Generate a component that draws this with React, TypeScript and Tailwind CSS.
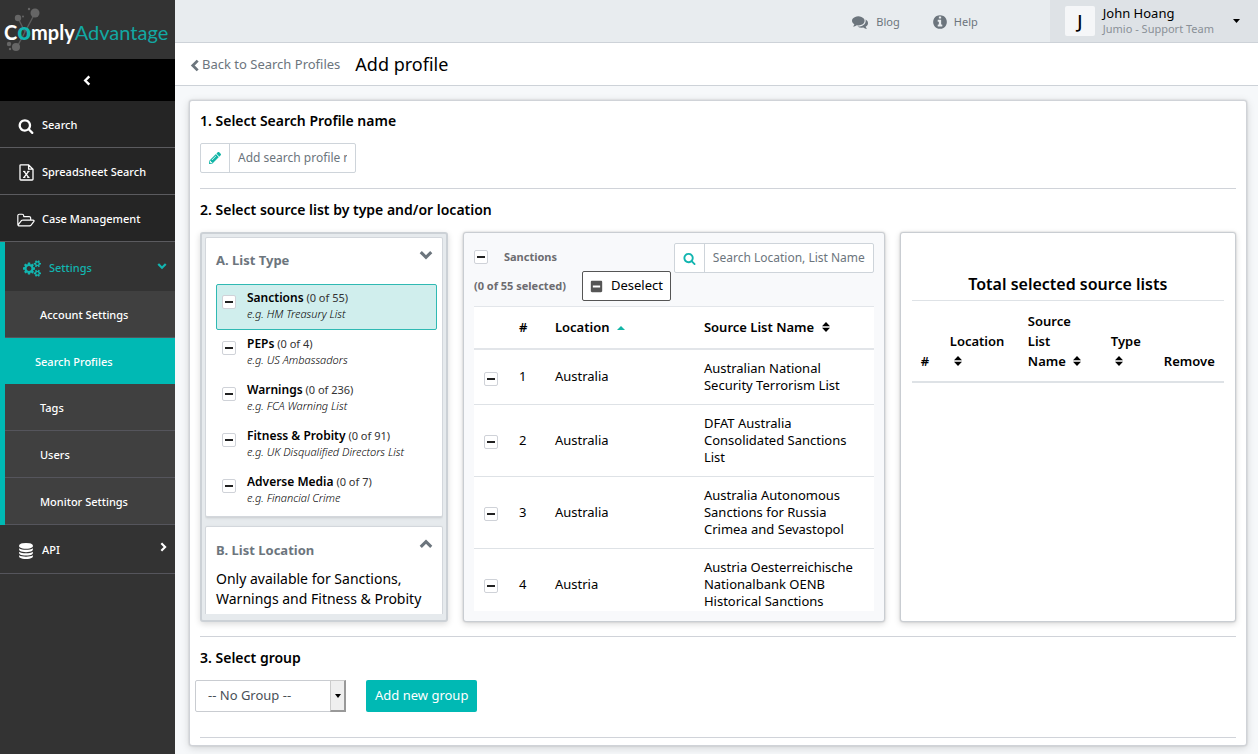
import type { ReactNode } from 'react';
import { FaMinusSquare, FaPencilAlt } from 'react-icons/fa';

const SEARCH =
  'M1216 832q0-185-131.5-316.5t-316.5-131.5-316.5 131.5-131.5 316.5 131.5 316.5 316.5 131.5 316.5-131.5 131.5-316.5zm512 832q0 52-38 90t-90 38q-54 0-90-38l-343-342q-179 124-399 124-143 0-273.5-55.5t-225-150-150-225-55.5-273.5 55.5-273.5 150-225 225-150 273.5-55.5 273.5 55.5 225 150 150 225 55.5 273.5q0 220-124 399l343 343q37 37 37 90z';
const DATABASE =
  'M896 768q237 0 443-43t325-127v170q0 69-103 128t-280 93.5-385 34.5-385-34.5-280-93.5-103-128v-170q119 84 325 127t443 43zm0 768q237 0 443-43t325-127v170q0 69-103 128t-280 93.5-385 34.5-385-34.5-280-93.5-103-128v-170q119 84 325 127t443 43zm0-384q237 0 443-43t325-127v170q0 69-103 128t-280 93.5-385 34.5-385-34.5-280-93.5-103-128v-170q119 84 325 127t443 43zm0-1152q208 0 385 34.5t280 93.5 103 128v128q0 69-103 128t-280 93.5-385 34.5-385-34.5-280-93.5-103-128v-128q0-69 103-128t280-93.5 385-34.5z';
const INFO =
  'M1152 1376v-160q0-14-9-23t-23-9h-96v-512q0-14-9-23t-23-9h-320q-14 0-23 9t-9 23v160q0 14 9 23t23 9h96v320h-96q-14 0-23 9t-9 23v160q0 14 9 23t23 9h448q14 0 23-9t9-23zm-128-896v-160q0-14-9-23t-23-9h-192q-14 0-23 9t-9 23v160q0 14 9 23t23 9h192q14 0 23-9t9-23zm640 416q0 209-103 385.5t-279.5 279.5-385.5 103-385.5-103-279.5-279.5-103-385.5 103-385.5 279.5-279.5 385.5-103 385.5 103 279.5 279.5 103 385.5z';
const COMMENTS =
  'M1408 768q0 139-94 257t-256.5 186.5-353.5 68.5q-86 0-176-16-124 88-278 128-36 9-86 16h-3q-11 0-20.5-8t-11.5-21q-1-3-1-6.5t.5-6.5 2-6l2.5-5 3.5-5.5 4-5 4.5-5 4-4.5q5-6 23-25t26-29.5 22.5-29 25-38.5 20.5-44q-124-72-195-177t-71-224q0-139 94-257t256.5-186.5 353.5-68.5 353.5 68.5 256.5 186.5 94 257zm384 256q0 120-71 224.5t-195 176.5q10 24 20.5 44t25 38.5 22.5 29 26 29.5 23 25q1 1 4 4.5t4.5 5 4 5 3.5 5.5l2.5 5 2 6 .5 6.5-1 6.5q-3 14-13 22t-22 7q-50-7-86-16-154-40-278-128-90 16-176 16-271 0-472-132 58 4 88 4 161 0 309-45t264-129q125-92 192-212t67-254q0-77-23-152 129 71 204 178t75 230z';
const FOLDER =
  'M1781 1003q0-35-53-35h-1088q-40 0-85.5 21.5t-71.5 52.5l-294 363q-18 24-18 40 0 35 53 35h1088q40 0 86-22t71-53l294-363q18-22 18-39zm-1141-163h768v-160q0-40-28-68t-68-28h-576q-40 0-68-28t-28-68v-64q0-40-28-68t-68-28h-320q-40 0-68 28t-28 68v853l256-315q44-53 116-87.5t140-34.5zm1269 163q0 62-46 120l-295 363q-43 53-116 87.5t-140 34.5h-1088q-92 0-158-66t-66-158v-960q0-92 66-158t158-66h320q92 0 158 66t66 158v32h544q92 0 158 66t66 158v160h192q54 0 99 24.5t67 70.5q15 32 15 68z';
const COGS =
  'M896 896q0-106-75-181t-181-75-181 75-75 181 75 181 181 75 181-75 75-181zm768 512q0-52-38-90t-90-38-90 38-38 90q0 53 37.5 90.5t90.5 37.5 90.5-37.5 37.5-90.5zm0-1024q0-52-38-90t-90-38-90 38-38 90q0 53 37.5 90.5t90.5 37.5 90.5-37.5 37.5-90.5zm-384 421v185q0 10-7 19.5t-16 10.5l-155 24q-11 35-32 76 34 48 90 115 7 11 7 20 0 12-7 19-23 30-82.5 89.5t-78.5 59.5q-11 0-21-7l-115-90q-37 19-77 31-11 108-23 155-7 24-30 24h-186q-11 0-20-7.5t-10-17.5l-23-153q-34-10-75-31l-118 89q-7 7-20 7-11 0-21-8-144-133-144-160 0-9 7-19 10-14 41-53t47-61q-23-44-35-82l-152-24q-10-1-17-9.5t-7-19.5v-185q0-10 7-19.5t16-10.5l155-24q11-35 32-76-34-48-90-115-7-11-7-20 0-12 7-20 22-30 82-89t79-59q11 0 21 7l115 90q34-18 77-32 11-108 23-154 7-24 30-24h186q11 0 20 7.5t10 17.5l23 153q34 10 75 31l118-89q8-7 20-7 11 0 21 8 144 133 144 160 0 8-7 19-12 16-42 54t-45 60q23 48 34 82l152 23q10 2 17 10.5t7 19.5zm640 533v140q0 16-149 31-12 27-30 52 51 113 51 138 0 4-4 7-122 71-124 71-8 0-46-47t-52-68q-20 2-30 2t-30-2q-14 21-52 68t-46 47q-2 0-124-71-4-3-4-7 0-25 51-138-18-25-30-52-149-15-149-31v-140q0-16 149-31 13-29 30-52-51-113-51-138 0-4 4-7 4-2 35-20t59-34 30-16q8 0 46 46.5t52 67.5q20-2 30-2t30 2q51-71 92-112l6-2q4 0 124 70 4 3 4 7 0 25-51 138 17 23 30 52 149 15 149 31zm0-1024v140q0 16-149 31-12 27-30 52 51 113 51 138 0 4-4 7-122 71-124 71-8 0-46-47t-52-68q-20 2-30 2t-30-2q-14 21-52 68t-46 47q-2 0-124-71-4-3-4-7 0-25 51-138-18-25-30-52-149-15-149-31v-140q0-16 149-31 13-29 30-52-51-113-51-138 0-4 4-7 4-2 35-20t59-34 30-16q8 0 46 46.5t52 67.5q20-2 30-2t30 2q51-71 92-112l6-2q4 0 124 70 4 3 4 7 0 25-51 138 17 23 30 52 149 15 149 31z';

function Glyph({ d, className, box = '0 0 1792 1792' }: { d: string; className: string; box?: string }) {
  return (
    <svg viewBox={box} className={className} fill="currentColor" aria-hidden="true">
      <path d={d} />
    </svg>
  );
}

const chevronPaths = {
  down: 'M1.5 3.5L6 8L10.5 3.5',
  up: 'M1.5 8.5L6 4L10.5 8.5',
  left: 'M8 1.5L3.5 6L8 10.5',
  right: 'M4 1.5L8.5 6L4 10.5',
};

function Chevron({ dir, className }: { dir: keyof typeof chevronPaths; className: string }) {
  return (
    <svg viewBox="0 0 12 12" className={className} fill="none" stroke="currentColor" strokeWidth="2.6" aria-hidden="true">
      <path d={chevronPaths[dir]} />
    </svg>
  );
}

function ExcelIcon() {
  return (
    <svg viewBox="0 0 15 17" className="h-[17px] w-[15px]" fill="none" stroke="currentColor" strokeWidth="1.3" aria-hidden="true">
      <path d="M1 1.6Q1 .8 1.8.8H9.6L14 5.2V15.2Q14 16 13.2 16H1.8Q1 16 1 15.2ZM9.6.8V5.2H14" />
      <path d="M5 7.4L9.6 13.4M9.6 7.4L5 13.4" />
      <path d="M4 7.4H6.4M8.2 7.4H10.6M4 13.4H6.4M8.2 13.4H10.6" strokeWidth="1" />
    </svg>
  );
}

function SortIcon() {
  return (
    <svg viewBox="0 0 8 10" className="inline-block h-[10px] w-2 align-baseline" fill="currentColor" aria-hidden="true">
      <path d="M4 0L8 4.3H0ZM0 5.7H8L4 10Z" />
    </svg>
  );
}

function Check({ label }: { label: string }) {
  return (
    <input
      type="checkbox"
      aria-label={label}
      className="grid h-[14px] w-[14px] shrink-0 appearance-none place-items-center rounded-[2px] border border-[#cfd2d8] bg-white before:h-[2px] before:w-2 before:bg-[#222] before:content-['']"
    />
  );
}

function Logo() {
  return (
    <div className="relative flex h-[59px] items-center bg-[#333] pl-1 pt-1">
      <svg viewBox="0 0 44 54" className="absolute top-0 left-0 h-[54px] w-11" fill="#666" aria-hidden="true">
        <path d="M35 13L25 32L17 47M18 18L25 32" stroke="#5c5c5c" strokeWidth="1.4" fill="none" />
        <circle cx="35" cy="13" r="4.5" />
        <circle cx="18" cy="18" r="3.2" />
        <circle cx="29" cy="9" r="1.2" />
        <circle cx="23" cy="16.5" r="1" />
        <circle cx="16" cy="47" r="4" />
        <circle cx="9" cy="44" r="2.2" />
        <circle cx="10" cy="49" r="1.2" />
      </svg>
      <span className="relative font-[Lato] text-[20px] leading-6 font-bold whitespace-nowrap text-white">
        C<span className="text-2xl leading-6 font-black text-[#12b5b0]">o</span>mply<span className="font-normal text-[#12a8a3]">Advantage</span>
      </span>
    </div>
  );
}

function NavItem({ icon, children }: { icon: ReactNode; children: ReactNode }) {
  return (
    <a href="#" className="flex h-[47px] items-center gap-2 border-b border-[#5b5b5f] bg-[#252525] pl-[18px] pt-[3px] text-white">
      <span className="flex w-4 shrink-0 justify-center">{icon}</span>
      {children}
    </a>
  );
}

const subItems = ['Account Settings', 'Search Profiles', 'Tags', 'Users', 'Monitor Settings'];

function Sidebar() {
  return (
    <aside className="w-[175px] shrink-0 bg-[#333] text-[11px] font-medium">
      <Logo />
      <button type="button" aria-label="Collapse menu" className="flex h-[42px] w-full items-center justify-center bg-black text-white">
        <Chevron dir="left" className="h-[11px] w-[11px]" />
      </button>
      <nav>
        <NavItem icon={<Glyph d={SEARCH} className="h-4 w-4 shrink-0" />}>Search</NavItem>
        <NavItem icon={<ExcelIcon />}>Spreadsheet Search</NavItem>
        <NavItem icon={<Glyph d={FOLDER} box="0 128 1920 1536" className="h-[14px] w-[18px] shrink-0" />}>Case Management</NavItem>
        <div className="border-l-[5px] border-[#00b9b4]">
          <a href="#" className="flex h-[49px] items-center gap-2 pr-2 pl-[18px] pt-1 text-[#12b5b0]">
            <Glyph d={COGS} box="0 0 1920 1792" className="h-[17px] w-[18px]" />
            <span className="grow">Settings</span>
            <Chevron dir="down" className="mb-1.5 h-[10px] w-[10px]" />
          </a>
          {subItems.map((s) =>
            s === 'Search Profiles' ? (
              <a key={s} href="#" className="flex h-[46px] items-center bg-[#00b9b4] pl-[30px] pt-0.5 text-white">
                {s}
              </a>
            ) : (
              <a key={s} href="#" className="flex h-[47px] items-center border-b border-[#55555c] bg-[#404040] pl-[35px] pt-0.5 text-white">
                {s}
              </a>
            ),
          )}
        </div>
        <a href="#" className="flex h-[49px] items-center gap-2 border-b border-[#55555c] pr-[7px] pl-[18px] pt-[3px] text-white">
          <Glyph d={DATABASE} className="h-4 w-4" />
          <span className="grow">API</span>
          <Chevron dir="right" className="mb-2 h-[10px] w-[10px]" />
        </a>
      </nav>
    </aside>
  );
}

function TopBar() {
  return (
    <header className="flex h-[43px] items-stretch justify-end border-b border-[#cdd2d8] bg-[#e8ecef]">
      <nav className="flex items-center gap-8 pt-0.5 pr-[72px] text-[11px] text-[#6c757d]">
        <a href="#" className="flex items-center gap-2">
          <Glyph d={COMMENTS} className="h-4 w-4" />
          Blog
        </a>
        <a href="#" className="flex items-center gap-1.5">
          <Glyph d={INFO} className="h-4 w-4" />
          Help
        </a>
      </nav>
      <button type="button" className="flex w-[208px] items-center bg-[#dee2e6] pr-[18px] pl-[15px] text-left">
        <span className="flex h-[30px] w-[30px] items-center justify-center rounded-[2px] bg-[#f5f6f8] text-lg font-medium">J</span>
        <span className="ml-2 grow leading-4">
          <span className="block text-[13px]">John Hoang</span>
          <span className="block text-[11px] text-[#8a9097]">Jumio - Support Team</span>
        </span>
        <svg viewBox="0 0 7 4" className="h-1 w-[7px]" aria-hidden="true">
          <path d="M0 0H7L3.5 4Z" />
        </svg>
      </button>
    </header>
  );
}

const types = [
  ['Sanctions', '(0 of 55)', 'e.g. HM Treasury List'],
  ['PEPs', '(0 of 4)', 'e.g. US Ambassadors'],
  ['Warnings', '(0 of 236)', 'e.g. FCA Warning List'],
  ['Fitness & Probity', '(0 of 91)', 'e.g. UK Disqualified Directors List'],
  ['Adverse Media', '(0 of 7)', 'e.g. Financial Crime'],
];

function TypePanel() {
  return (
    <div className="h-[390px] overflow-hidden rounded-[3px] border-2 border-[#ccd1d6] bg-[#e6eaed] p-[3px] pb-1.5 shadow-[0_2px_6px_rgba(0,0,0,0.15)]">
      <div className="flex h-full flex-col gap-[9px] overflow-hidden">
        <section className="shrink-0 rounded-[2px] border border-[#d3d7dc] bg-white pt-2.5 pr-[5px] pb-0.5 pl-[10px] shadow-sm">
          <div className="flex h-9 items-start justify-between pr-1">
            <h3 className="pt-0.5 text-[13px] leading-5 font-bold text-[#6c757d]">A. List Type</h3>
            <Chevron dir="down" className="h-[14px] w-[14px] text-[#6c757d]" />
          </div>
          {types.map(([name, count, eg], i) => (
            <label
              key={name}
              className={
                i === 0
                  ? 'flex h-[46px] gap-[11px] rounded-[2px] border border-[#2fb9b3] bg-[#d0eeed] pt-[5px] pl-[5px]'
                  : 'flex h-[46px] gap-[11px] border border-transparent pt-[5px] pl-[5px]'
              }
            >
              <span className="pt-[5px]">
                <Check label={name} />
              </span>
              <span className="text-[11px] leading-4 whitespace-nowrap">
                <b className="text-xs font-semibold">{name}</b> <span className="text-[#333]">{count}</span>
                <i className="block font-light text-black">{eg}</i>
              </span>
            </label>
          ))}
        </section>
        <section className="shrink-0 rounded-t-[2px] border border-[#d3d7dc] bg-white pt-2.5 pr-[5px] pl-[10px] shadow-sm">
          <div className="flex h-8 items-start justify-between pr-1">
            <h3 className="pt-[3px] text-[13px] leading-5 font-bold text-[#6c757d]">B. List Location</h3>
            <Chevron dir="up" className="h-[14px] w-[14px] text-[#6c757d]" />
          </div>
          <p className="pb-3 text-sm leading-5">Only available for Sanctions, Warnings and Fitness &amp; Probity</p>
        </section>
      </div>
    </div>
  );
}

const sources = [
  ['Australia', 'Australian National Security Terrorism List'],
  ['Australia', 'DFAT Australia Consolidated Sanctions List'],
  ['Australia', 'Australia Autonomous Sanctions for Russia Crimea and Sevastopol'],
  ['Austria', 'Austria Oesterreichische Nationalbank OENB Historical Sanctions'],
];

function SourcePanel() {
  return (
    <div className="flex h-[390px] flex-col overflow-hidden rounded-[3px] border border-[#c9cdd2] bg-[#f8f9fb] p-[10px] shadow-[0_0_2px_rgba(0,0,0,0.2),0_2px_6px_rgba(0,0,0,0.15)]">
      <div className="flex h-[63px] shrink-0 items-start">
        <div className="grow text-[11px] font-bold text-[#6c6c70]">
          <label className="flex h-7 items-center gap-4">
            <Check label="Select all sanctions" />
            Sanctions
          </label>
          <div className="flex items-center gap-4">
            (0 of 55 selected)
            <button type="button" className="flex h-[30px] items-center gap-2 rounded-[2px] border border-[#555] bg-white px-[7px] text-[13px] font-normal text-black">
              <FaMinusSquare size={13} className="text-[#555]" />
              Deselect
            </button>
          </div>
        </div>
        <div className="flex h-[30px] w-[200px] shrink-0 rounded-[2px] border border-[#ced4da] bg-white">
          <span className="flex w-[30px] shrink-0 items-center justify-center border-r border-[#ced4da] text-[#12b5b0]">
            <Glyph d={SEARCH} className="h-[13px] w-[13px]" />
          </span>
          <input aria-label="Search location or list name" placeholder="Search Location, List Name" className="min-w-0 grow px-2 text-xs placeholder:text-[#6c757d]" />
        </div>
      </div>
      <div className="min-h-0 grow overflow-hidden bg-white">
        <table className="w-full table-fixed border-t border-[#e3e6ea] text-left text-[13px] leading-[17px]">
          <thead>
            <tr className="h-[42px] border-b-2 border-[#e2e5e9]">
              <th className="w-[45px]" aria-label="Selected" />
              <th className="w-[36px] font-semibold">#</th>
              <th className="w-[149px] font-semibold">
                Location{' '}
                <svg viewBox="0 0 8 4" className="ml-1 inline-block h-1 w-2 align-middle" fill="#12b5a6" aria-hidden="true">
                  <path d="M4 0L8 4H0Z" />
                </svg>
              </th>
              <th className="font-semibold">
                Source List Name <span className="ml-1"><SortIcon /></span>
              </th>
            </tr>
          </thead>
          <tbody>
            {sources.map(([loc, name], i) => (
              <tr key={name} className="border-b border-[#dee2e6]">
                <td className="pt-1 pl-2.5">
                  <Check label={name} />
                </td>
                <td>{i + 1}</td>
                <td>{loc}</td>
                <td className="py-2.5 pr-4">{name}</td>
              </tr>
            ))}
          </tbody>
        </table>
      </div>
    </div>
  );
}

function SelectedPanel() {
  return (
    <div className="h-[390px] rounded-[3px] border border-[#c9cdd2] bg-white px-[11px] pt-10 shadow-[0_0_2px_rgba(0,0,0,0.2),0_2px_6px_rgba(0,0,0,0.15)]">
      <h3 className="border-b border-[#dee2e6] pb-[5px] text-center text-base leading-[22px] font-semibold">Total selected source lists</h3>
      <table className="w-full table-fixed text-left text-[13px] leading-5">
        <thead>
          <tr className="border-b-2 border-[#dee2e6] align-bottom [&>th]:pt-2.5 [&>th]:pb-2.5 [&>th]:font-semibold">
            <th className="w-[38px] pl-[9px]">#</th>
            <th className="w-[78px]">
              Location <span className="block pl-1"><SortIcon /></span>
            </th>
            <th className="w-[83px]">
              Source<br />List<br />Name <span className="ml-1"><SortIcon /></span>
            </th>
            <th className="w-[53px]">
              Type <span className="block pl-1"><SortIcon /></span>
            </th>
            <th>Remove</th>
          </tr>
        </thead>
      </table>
    </div>
  );
}

export default function App() {
  return (
    <div className="flex min-h-screen bg-[#f6f8fa] font-['Noto_Sans',sans-serif] text-black">
      <Sidebar />
      <div className="flex min-w-0 grow flex-col">
        <TopBar />
        <div className="flex h-[43px] items-center gap-[15px] border-b border-[#cdd2d8] bg-white pl-[14px]">
          <a href="#" className="flex items-center pt-0.5 text-[13px] text-[#6c757d]">
            <Chevron dir="left" className="h-[13px] w-[13px]" />
            Back to Search Profiles
          </a>
          <h1 className="text-lg">Add profile</h1>
        </div>
        <main className="mt-[14px] mr-[11px] mb-2 ml-[14px] rounded-[3px] border border-[#d0d3d8] bg-white px-[10px] pt-[10px] shadow-[0_0_2px_rgba(0,0,0,0.2),0_2px_8px_rgba(0,0,0,0.15)]">
          <h2 className="text-sm leading-5 font-semibold">1. Select Search Profile name</h2>
          <div className="mt-3 flex h-[30px] w-[156px] rounded-[2px] border border-[#ced4da]">
            <span className="flex w-[29px] shrink-0 items-center justify-center border-r border-[#ced4da] text-[#12b5a6]">
              <FaPencilAlt size={12} />
            </span>
            <input aria-label="Search profile name" placeholder="Add search profile name" className="min-w-0 grow px-2 text-xs placeholder:text-[#6c757d]" />
          </div>
          <hr className="mt-[15px] border-[#d0d3d9]" />
          <h2 className="mt-[11px] text-sm leading-5 font-semibold">2. Select source list by type and/or location</h2>
          <div className="mt-3 grid grid-cols-[248fr_422fr_336fr] gap-[15px]">
            <TypePanel />
            <SourcePanel />
            <SelectedPanel />
          </div>
          <hr className="mt-3.5 border-[#d0d3d9]" />
          <h2 className="mt-[11px] text-sm leading-5 font-semibold">3. Select group</h2>
          <div className="-ml-[5px] mt-3 flex items-center gap-5">
            <div className="relative h-8 w-[151px]">
              <select aria-label="Group" className="h-full w-full appearance-none rounded-[2px] border border-[#c9ccd1] bg-white pl-3 text-[13px] text-[#495057]">
                <option>-- No Group --</option>
              </select>
              <span className="pointer-events-none absolute inset-y-0 right-0 flex w-4 items-center justify-center border border-r-2 border-b-2 border-[#999] border-t-[#ccc] border-l-[#ccc] bg-[#efefef]">
                <svg viewBox="0 0 6 4" className="h-1 w-1.5" aria-hidden="true">
                  <path d="M0 0H6L3 4Z" />
                </svg>
              </span>
            </div>
            <button type="button" className="h-8 rounded-[2px] bg-[#00b9b4] px-[9px] text-[13px] text-white">
              Add new group
            </button>
          </div>
          <hr className="mt-[25px] mb-[7px] border-[#d0d3d9]" />
        </main>
      </div>
    </div>
  );
}
